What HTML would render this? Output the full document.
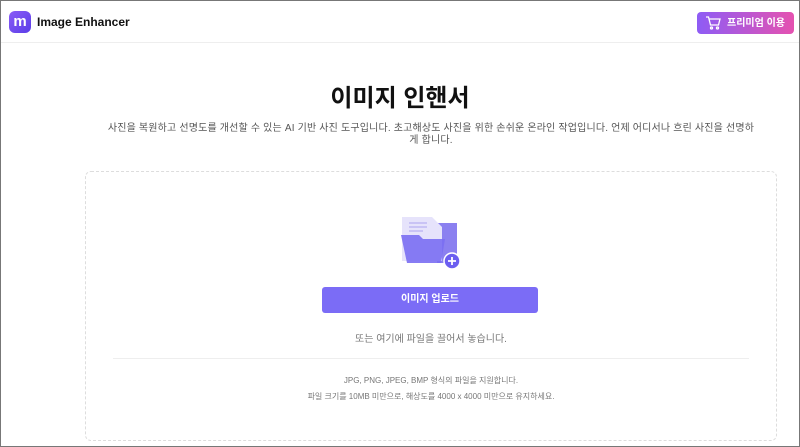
<!DOCTYPE html>
<html><head><meta charset="utf-8"><style>
*{margin:0;padding:0;box-sizing:border-box}
body{width:800px;height:447px;overflow:hidden;font-family:"Liberation Sans","Noto Sans CJK KR",sans-serif;background:#fff;position:relative;border:1px solid #777}
.hdr{position:absolute;left:0;top:0;width:798px;height:42px;border-bottom:1px solid #eee;background:#fff}
.logo{position:absolute;left:8px;top:10px;width:22px;height:22px;border-radius:6px;background:linear-gradient(135deg,#8a5cf6,#5a3de8);color:#fff;font-weight:bold;font-size:15px;text-align:center;line-height:21px}
.name{position:absolute;left:36px;top:14px;font-size:12px;font-weight:bold;color:#111}
.prem{position:absolute;left:696px;top:11px;width:97px;height:22px;border-radius:4px;background:linear-gradient(90deg,#8e5cf5,#e552b0);color:#fff;font-size:10px;font-weight:bold;line-height:23px;padding-left:30px;white-space:nowrap}
.prem svg{position:absolute;left:8px;top:4px}
h1{position:absolute;top:77px;width:798px;text-align:center;font-size:24px;font-weight:bold;color:#111}
.desc{position:absolute;left:106px;top:122px;width:648px;text-align:center;font-size:10px;line-height:12px;color:#555;word-break:break-all;letter-spacing:0.17px}
.box{position:absolute;left:84px;top:170px;width:692px;height:270px;border:1px dashed #ddd;border-radius:6px}
.btn{position:absolute;left:321px;top:286px;width:216px;height:26px;border-radius:3px;background:#7b6cf6;color:#fff;font-size:10px;font-weight:bold;text-align:center;line-height:26px}
.t1{position:absolute;left:84px;top:329px;width:692px;text-align:center;font-size:10px;color:#777}
.line{position:absolute;left:112px;top:357px;width:636px;border-top:1px solid #eee}
.t2{position:absolute;left:84px;top:372px;width:692px;text-align:center;font-size:8px;line-height:16px;color:#777}
</style></head><body>
<div class="hdr"><div class="logo">m</div><div class="name">Image Enhancer</div>
<div class="prem"><svg width="16" height="14" viewBox="0 0 16 14" fill="none" stroke="#fff" stroke-width="1.3"><path d="M1 1h2.5l2 8h8l1.5-6H4.5"/><circle cx="6.5" cy="12" r="1"/><circle cx="12.5" cy="12" r="1"/></svg>프리미엄 이용</div></div>
<h1>이미지 인핸서</h1>
<div class="desc">사진을 복원하고 선명도를 개선할 수 있는 AI 기반 사진 도구입니다. 초고해상도 사진을 위한 손쉬운 온라인 작업입니다. 언제 어디서나 흐린 사진을 선명하게 합니다.</div>
<div class="box"></div>
<svg style="position:absolute;left:398px;top:212px" width="64" height="58" viewBox="0 0 64 58">
<path d="M38 10h20v40H38z" fill="#8b80f0"/>
<path d="M3 4h30l10 10v34H3z" fill="#e6e3fb"/>
<path d="M10 10h18M10 14h18M10 18h14" stroke="#c9c3f5" stroke-width="2"/>
<path d="M2 22h18l4 4h22l-4 24H8z" fill="#7a6ef2" opacity=".9"/>
<circle cx="53" cy="48" r="8" fill="#6b5ef0" stroke="#fff" stroke-width="1.5"/>
<path d="M53 44v8M49 48h8" stroke="#fff" stroke-width="1.8"/>
</svg>
<div class="btn">이미지 업로드</div>
<div class="t1">또는 여기에 파일을 끌어서 놓습니다.</div>
<div class="line"></div>
<div class="t2">JPG, PNG, JPEG, BMP 형식의 파일을 지원합니다.<br>파일 크기를 10MB 미만으로, 해상도를 4000 x 4000 미만으로 유지하세요.</div>
</body></html>
